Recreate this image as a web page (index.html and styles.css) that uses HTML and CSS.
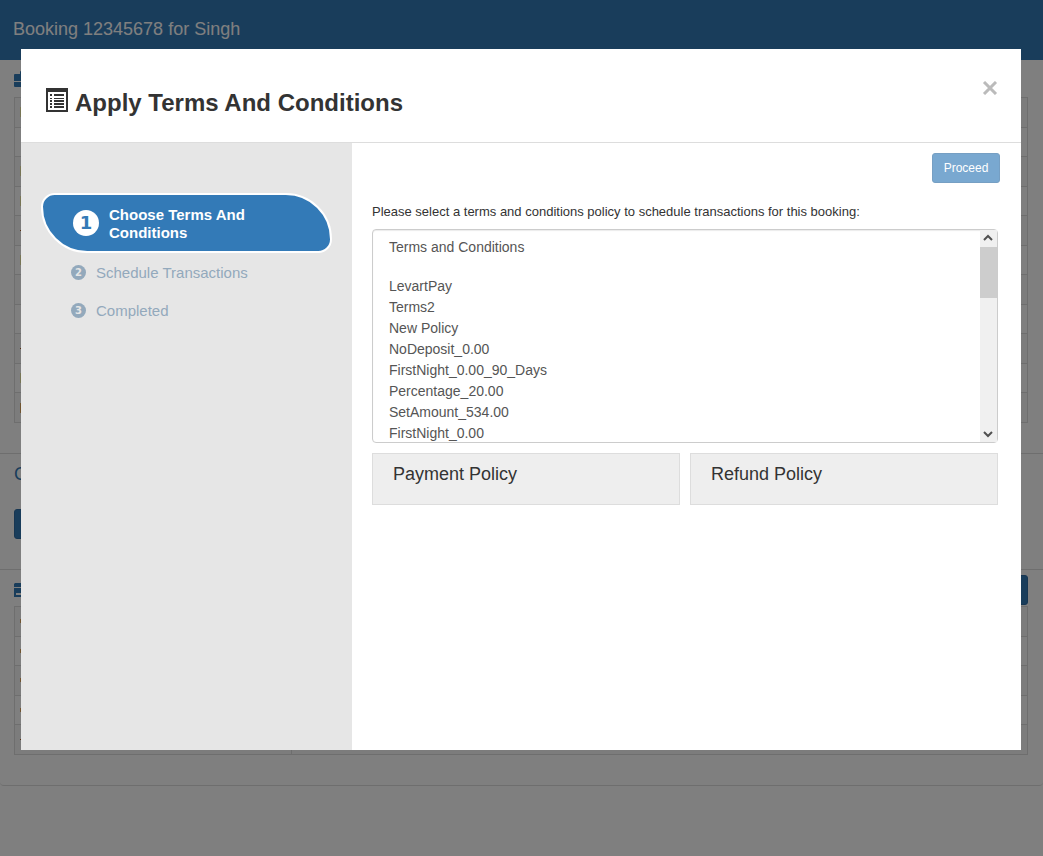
FILE: index.html
```
<!DOCTYPE html>
<html lang="en">
<head>
    <meta charset="UTF-8">
    <meta name="viewport" content="width=device-width, initial-scale=1.0">
    <title>Booking 12345678 for Singh</title>
    <link rel="stylesheet" href="styles.css">
</head>
<body>
    <!-- Booking page under the dialog -->
    <header class="page-header">Booking 12345678 for Singh</header>
    <main class="panel">
        <section class="section section-details">
            <div class="section-title">
                <svg class="section-icon" width="18" height="18" viewBox="0 0 18 18"><path d="M1 4h5V2q0-1 1-1h4q1 0 1 1v2h5q1 0 1 1v6H0V5q0-1 1-1zM0 12h18v4q0 1-1 1H1q-1 0-1-1z"/></svg>
            </div>
            <table class="grid grid-details">
                <tbody>
                    <tr><td><span class="mark yellow"></span></td><td></td></tr>
                    <tr><td></td><td></td></tr>
                    <tr><td><span class="mark yellow"></span></td><td></td></tr>
                    <tr><td><span class="mark yellow"></span></td><td></td></tr>
                    <tr><td><span class="mark brown"></span></td><td></td></tr>
                    <tr><td><span class="mark yellow"></span></td><td></td></tr>
                    <tr><td></td><td></td></tr>
                    <tr><td></td><td></td></tr>
                    <tr><td><span class="mark brown"></span></td><td></td></tr>
                    <tr><td><span class="mark yellow"></span></td><td></td></tr>
                    <tr><td><span class="mark orange"></span></td><td></td></tr>
                </tbody>
            </table>
        </section>
        <section class="section section-actions">
            <h3>C</h3>
            <button class="btn btn-page" type="button"></button>
        </section>
        <section class="section section-payments">
            <div class="section-title">
                <svg class="section-icon" width="18" height="14" viewBox="0 0 18 14"><path d="M1 0h17v4H0V1zM0 5h18v9H0zM2 10v2h8v-2z" fill-rule="evenodd"/></svg>
                <button class="btn btn-page" type="button"></button>
            </div>
            <table class="grid grid-payments">
                <tbody>
                    <tr><td><span class="mark orange small"></span></td><td></td></tr>
                    <tr><td><span class="mark orange small"></span></td><td></td></tr>
                    <tr><td><span class="mark orange small"></span></td><td></td></tr>
                    <tr><td><span class="mark orange small"></span></td><td></td></tr>
                    <tr><td><span class="mark brown"></span></td><td></td></tr>
                </tbody>
            </table>
        </section>
    </main>

    <!-- Terms and conditions dialog -->
    <div class="backdrop">
        <div class="modal" role="dialog" aria-labelledby="modalTitle">
            <div class="modal-header">
                <svg class="title-icon" width="22" height="24" viewBox="0 0 22 24" shape-rendering="crispEdges">
                    <path d="M0 0h22v24H0zM2 4v18h18V4z" fill-rule="evenodd"/>
                    <path d="M4 6h2v2H4zM4 10h2v1H4zM4 12h2v2H4zM4 15h2v2H4zM4 18h2v2H4zM8 6h10v2H8zM8 10h10v1H8zM8 12h10v2H8zM8 15h10v2H8zM8 18h10v2H8z"/>
                </svg>
                <h1 id="modalTitle">Apply Terms And Conditions</h1>
                <button class="close" type="button" aria-label="Close">
                    <svg width="16" height="14" viewBox="0 0 16 14"><path d="M2 1l12 12M14 1L2 13"/></svg>
                </button>
            </div>
            <div class="modal-body">
                <ol class="steps">
                    <li class="step active">
                        <span class="number">1</span>
                        <span class="step-name">Choose Terms And Conditions</span>
                    </li>
                    <li class="step">
                        <span class="number">2</span>
                        <span class="step-name">Schedule Transactions</span>
                    </li>
                    <li class="step">
                        <span class="number">3</span>
                        <span class="step-name">Completed</span>
                    </li>
                </ol>
                <form class="content">
                    <button class="btn btn-proceed" type="button">Proceed</button>
                    <label for="policy">Please select a terms and conditions policy to schedule transactions for this booking:</label>
                    <div class="list">
                        <select id="policy" size="10">
                            <option>Terms and Conditions</option>
                            <option class="blank" value=""></option>
                            <option>LevartPay</option>
                            <option>Terms2</option>
                            <option>New Policy</option>
                            <option>NoDeposit_0.00</option>
                            <option>FirstNight_0.00_90_Days</option>
                            <option>Percentage_20.00</option>
                            <option>SetAmount_534.00</option>
                            <option>FirstNight_0.00</option>
                        </select>
                        <div class="scrollbar" aria-hidden="true">
                            <svg width="17" height="17" viewBox="0 0 17 17"><path d="M4 10l4-4 4 4"/></svg>
                            <div class="thumb"></div>
                            <svg width="17" height="17" viewBox="0 0 17 17"><path d="M4 7l4 4 4-4"/></svg>
                        </div>
                    </div>
                    <div class="policies">
                        <div class="policy-box"><h2>Payment Policy</h2></div>
                        <div class="policy-box"><h2>Refund Policy</h2></div>
                    </div>
                </form>
            </div>
        </div>
    </div>
</body>
</html>
```

FILE: styles.css
```
/* Reset */
* {
    margin: 0;
    padding: 0;
    box-sizing: border-box;
}

body {
    font-family: "Liberation Sans", Arial, sans-serif;
    font-size: 13px;
    color: #333;
    background-color: #fff;
}

h1, h2, h3 {
    font-weight: normal;
}

/* Booking page */
.page-header {
    height: 60px;
    padding: 0 13px;
    line-height: 58px;
    font-size: 18px;
    color: #fff;
    background-color: #337ab7;
}

.panel {
    border-bottom: 1px solid #ddd;
    border-radius: 4px;
}

.section {
    padding: 0 15px 0 14px;
}

.section + .section {
    border-top: 1px solid #ddd;
}

.section-title {
    display: flex;
    justify-content: space-between;
    align-items: center;
    height: 37px;
}

.section-icon {
    fill: #337ab7;
}

.section-details {
    padding-bottom: 30px;
}

.section-actions {
    height: 116px;
    padding-top: 8px;
}

.section-actions h3 {
    height: 47px;
    line-height: 24px;
    font-size: 18px;
    color: #337ab7;
}

.section-payments {
    padding-bottom: 30px;
}

.section-payments .section-title {
    height: 36px;
    padding-top: 4px;
}

.grid {
    width: 100%;
    border-collapse: collapse;
}

.grid-details {
    height: 326px;
}

.grid-payments {
    height: 149px;
}

.grid td {
    height: 29px;
    border: 1px solid #ddd;
    padding: 0 5px;
}

.grid tr:nth-child(odd) {
    background-color: #f9f9f9;
}

.grid td:first-child {
    width: 277px;
}

.mark {
    display: block;
    width: 12px;
    height: 10px;
}

.mark.small {
    height: 4px;
}

.yellow {
    background-color: #efebaa;
}

.orange {
    background-color: #e0a860;
}

.mark.brown {
    height: 1px;
    background-color: #a85a20;
}

/* Buttons */
.btn {
    height: 30px;
    border: 1px solid #2e6da4;
    border-radius: 3px;
    font-family: inherit;
    font-size: 12px;
    color: #fff;
    background-color: #337ab7;
    cursor: pointer;
}

.btn-page {
    display: block;
    width: 80px;
}

.btn-proceed {
    align-self: flex-end;
    width: 68px;
    margin-right: -2px;
    opacity: 0.65;
}

/* Dialog */
.backdrop {
    position: fixed;
    inset: 0;
    display: flex;
    flex-direction: column;
    padding: 49px 22px 106px 21px;
    background-color: rgba(0, 0, 0, 0.5);
}

.modal {
    flex: 1;
    display: flex;
    flex-direction: column;
    background-color: #fff;
}

.modal-header {
    display: flex;
    align-items: center;
    height: 94px;
    padding: 11px 23px 0 25px;
    border-bottom: 1px solid #ddd;
}

.title-icon {
    margin: 0 7px 2px 0;
    fill: #333;
}

.modal-header h1 {
    flex: 1;
    padding-top: 4px;
    line-height: 32px;
    font-size: 24px;
    font-weight: bold;
}

.close {
    margin-bottom: 26px;
    border: none;
    background: none;
    cursor: pointer;
}

.close svg {
    display: block;
    fill: none;
    stroke: #bbb;
    stroke-width: 3;
}

.modal-body {
    flex: 1;
    display: flex;
}

/* Steps */
.steps {
    width: 331px;
    padding: 50px 20px;
    list-style: none;
    background-color: #e6e6e6;
}

.step {
    display: flex;
    align-items: center;
    gap: 10px;
    height: 38px;
    padding-left: 30px;
    font-size: 15px;
    color: #93a9bc;
}

.step.active {
    height: 60px;
    padding: 0 60px 0 30px;
    border: 2px solid #fff;
    border-radius: 14px 47px 14px 47px;
    line-height: 18px;
    font-weight: bold;
    color: #fff;
    background-color: #337ab7;
}

.active .step-name {
    padding-top: 2px;
}

.number {
    flex-shrink: 0;
    width: 15px;
    height: 15px;
    border-radius: 50%;
    line-height: 15px;
    font-family: "DejaVu Sans", sans-serif;
    font-size: 10px;
    font-weight: bold;
    text-align: center;
    color: #e6e6e6;
    background-color: #93a9bc;
}

.active .number {
    width: 26px;
    height: 26px;
    line-height: 26px;
    font-size: 18px;
    color: #337ab7;
    background-color: #fff;
}

/* Policy form */
.content {
    flex: 1;
    display: flex;
    flex-direction: column;
    padding: 10px 23px 20px 20px;
}

.content label {
    margin: 20px 0 8px;
    line-height: 18px;
    font-size: 13px;
}

.list {
    position: relative;
}

.list select {
    display: block;
    width: 100%;
    height: 214px;
    padding: 9px 14px 0;
    border: 1px solid #ccc;
    border-radius: 4px;
    outline: none;
    font-family: inherit;
    font-size: 14px;
    color: #555;
    background-color: #fff;
    box-shadow: inset 0 1px 1px rgba(0, 0, 0, 0.08);
    scrollbar-width: none;
}

.list option {
    height: 21px;
    min-height: 0;
    padding: 0 2px;
    line-height: 21px;
}

.list option.blank {
    height: 18px;
}

.scrollbar {
    position: absolute;
    top: 1px;
    right: 1px;
    bottom: 1px;
    display: flex;
    flex-direction: column;
    width: 17px;
    background-color: #f0f0f0;
}

.scrollbar svg {
    fill: none;
    stroke: #505050;
    stroke-width: 2;
}

.thumb {
    height: 51px;
    margin-bottom: auto;
    background-color: #cdcdcd;
}

.policies {
    display: flex;
    gap: 10px;
    margin-top: 10px;
}

.policy-box {
    flex: 1;
    height: 52px;
    padding: 8px 20px;
    border: 1px solid #ddd;
    background-color: #eee;
}

.policy-box h2 {
    line-height: 24px;
    font-size: 18px;
}
```
